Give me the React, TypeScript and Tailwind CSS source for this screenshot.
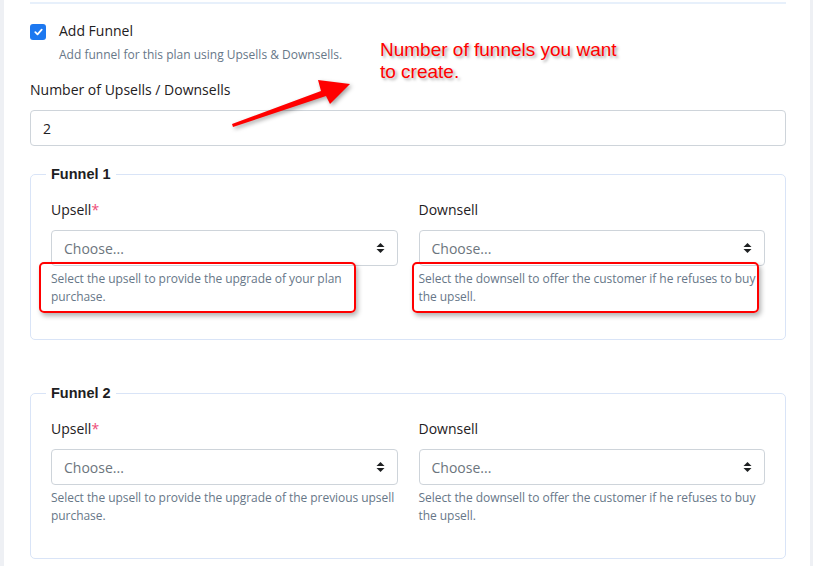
import React from "react";

const Caret = () => (
  <svg width="9" height="12" viewBox="0 0 9 12" className="shrink-0">
    <path d="M4.5 1 L8.5 5 H0.5 Z" fill="#1e2022" />
    <path d="M4.5 11 L8.5 7 H0.5 Z" fill="#1e2022" />
  </svg>
);

const Select = () => (
  <div className="h-[36px] rounded-[4px] border border-[#ced4da] bg-white flex items-center justify-between pl-[12px] pr-[12px] text-[14px] text-[#6c757d]">
    <span>Choose...</span>
    <Caret />
  </div>
);

function Col({ label, req, help }: { label: string; req?: boolean; help: string }) {
  return (
    <div className="flex flex-col">
      <div className="text-[14px] leading-[22px] text-[#1e2022]">
        {label}
        {req && <span className="text-[#ed4c78]">*</span>}
      </div>
      <div className="mt-[9px]">
        <Select />
      </div>
      <div className="mt-[4px] text-[12px] leading-[18px] tracking-[-0.05px] text-[#677788]">{help}</div>
    </div>
  );
}

function Funnel({ n, upHelp }: { n: number; upHelp: string }) {
  return (
    <fieldset className="border border-[#d9e4f7] rounded-[5px] pl-[20px] pr-[20px] pt-[15px] pb-[33px]">
      <legend
        className="ml-[-5px] px-[5px] text-[14.5px] leading-[20px] font-bold text-[#1e2022]"
        style={{ fontFamily: '"Liberation Sans", Arial, sans-serif' }}
      >
        Funnel {n}
      </legend>
      <div className="grid grid-cols-2 gap-x-[21px]">
        <Col label="Upsell" req help={upHelp} />
        <Col label="Downsell" help="Select the downsell to offer the customer if he refuses to buy the upsell." />
      </div>
    </fieldset>
  );
}

export default function App() {
  return (
    <div
      className="relative w-[813px] h-[566px] overflow-hidden bg-white flex"
      style={{ fontFamily: '"Open Sans", Lato, sans-serif' }}
    >
      <div className="w-[4px] bg-[#eef0f4] shrink-0" />
      <div className="flex-1 flex flex-col pl-[26px] pr-[24px]">
        <div className="mt-[2px] h-[2px] bg-[#e7f0fb]" />
        <div className="mt-[20px] flex items-start gap-[13px]">
          <div className="w-[16px] h-[16px] rounded-[3px] bg-[#1d78f0] flex items-center justify-center shrink-0">
            <svg width="9" height="8" viewBox="0 0 9 8">
              <path d="M1.3 4.2 L3.5 6.3 L7.7 1.7" stroke="white" strokeWidth="1.8" fill="none" strokeLinecap="round" strokeLinejoin="round" />
            </svg>
          </div>
          <div className="flex flex-col">
            <div className="mt-[-2px] text-[14px] leading-[18px] text-[#1e2022]">Add Funnel</div>
            <div className="mt-[7px] text-[12px] leading-[16px] text-[#677788]">
              Add funnel for this plan using Upsells &amp; Downsells.
            </div>
          </div>
        </div>
        <div className="mt-[16px] text-[14px] leading-[22px] text-[#1e2022]">Number of Upsells / Downsells</div>
        <div className="mt-[9px] h-[36px] rounded-[4px] border border-[#ced4da] flex items-center pl-[12px] text-[14px] text-[#1e2022]">
          2
        </div>
        <div className="mt-[18px]">
          <Funnel n={1} upHelp="Select the upsell to provide the upgrade of your plan purchase." />
        </div>
        <div className="mt-[43px]">
          <Funnel n={2} upHelp="Select the upsell to provide the upgrade of the previous upsell purchase." />
        </div>
      </div>
      <div className="w-[3px] bg-[#eef0f4] shrink-0" />

      {/* annotations */}
      <div
        className="absolute left-[380px] top-[39px] text-[19px] leading-[22px] text-[#ff0000]"
        style={{ fontFamily: '"Liberation Sans", Arial, sans-serif', textShadow: "2px 2px 3px rgba(0,0,0,0.35)" }}
      >
        Number of funnels you want
        <br />
        to create.
      </div>
      <svg className="absolute left-0 top-0" width="813" height="566" style={{ filter: "drop-shadow(2px 2px 2px rgba(0,0,0,0.35))" }}>
        <polygon points="232,124 321,91 318,80 350,84 330,104 326,96 233,127" fill="#ff0000" />
      </svg>
      <div className="absolute left-[39px] top-[262px] w-[317px] h-[51px] rounded-[5px] border-2 border-[#ff0000] shadow-[2px_3px_5px_rgba(0,0,0,0.3)]" />
      <div className="absolute left-[412px] top-[262px] w-[347px] h-[51px] rounded-[5px] border-2 border-[#ff0000] shadow-[2px_3px_5px_rgba(0,0,0,0.3)]" />
    </div>
  );
}
